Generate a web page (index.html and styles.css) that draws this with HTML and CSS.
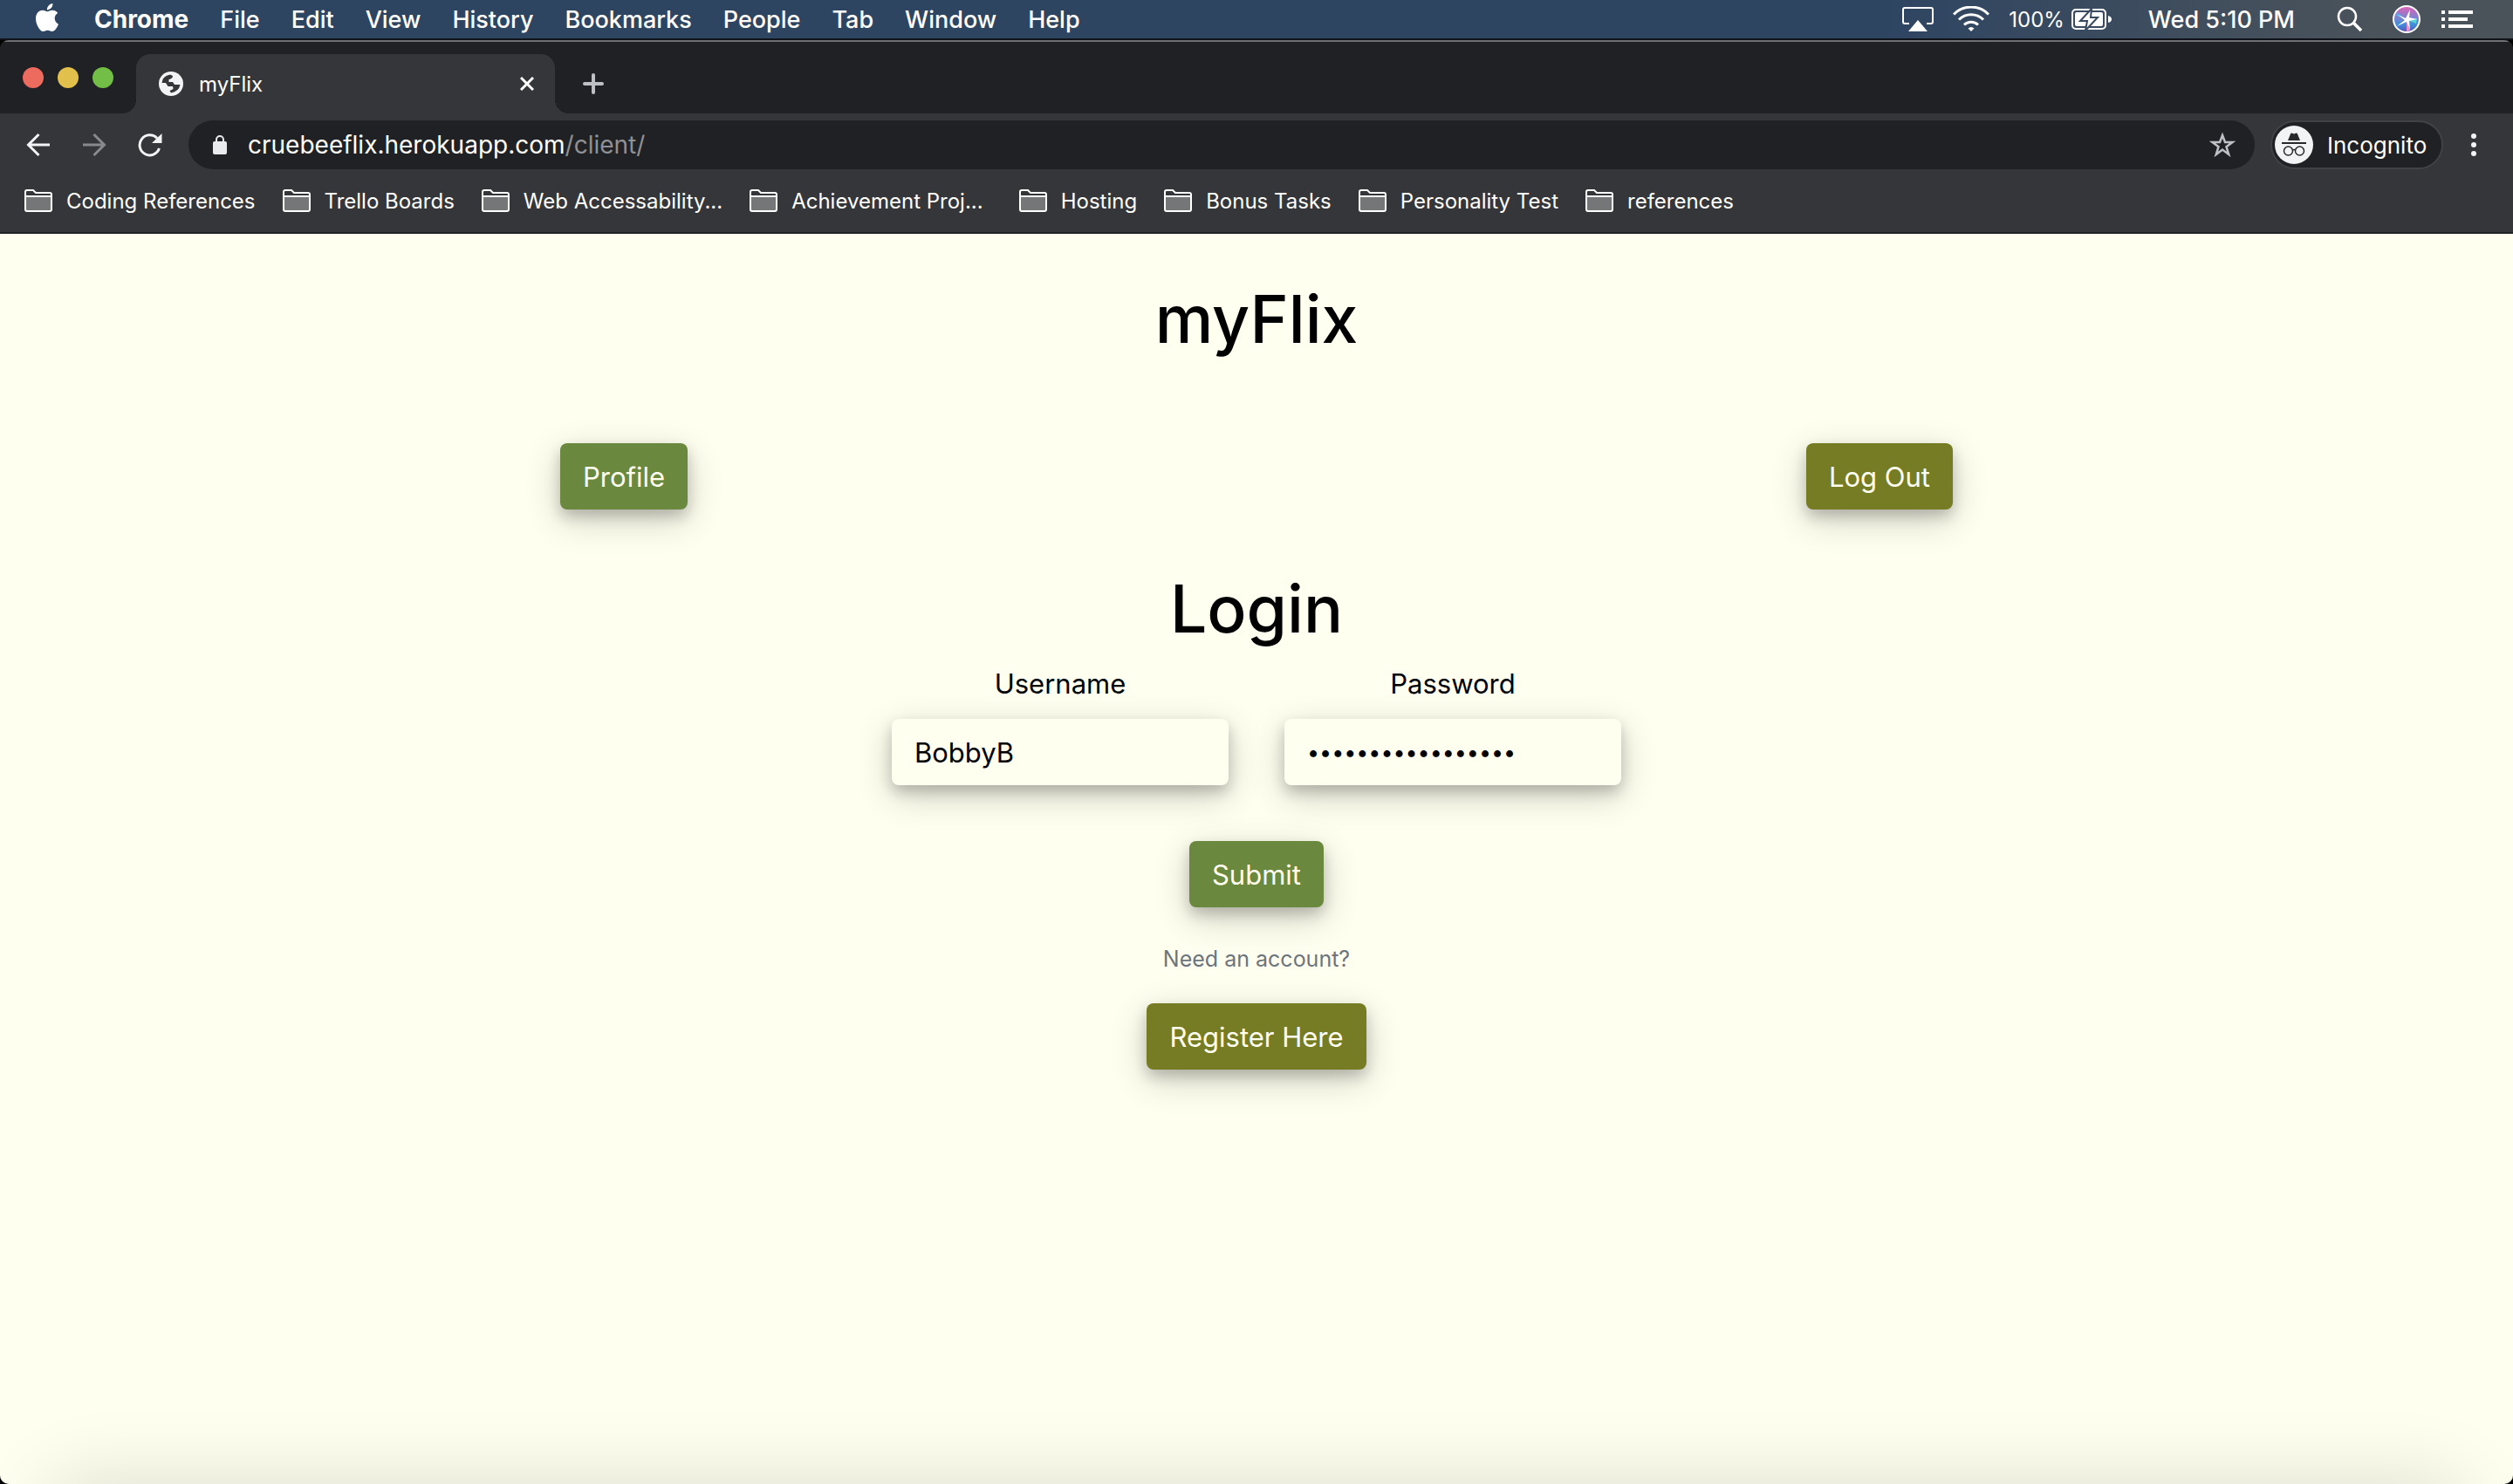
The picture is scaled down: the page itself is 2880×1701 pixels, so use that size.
FILE: index.html
```html
<!DOCTYPE html>
<html lang="en">
<head>
<meta charset="utf-8">
<title>myFlix</title>
<meta name="viewport" content="width=device-width, initial-scale=1">
<link rel="stylesheet" href="styles.css">
</head>
<body>
<svg class="defs" aria-hidden="true">
  <symbol id="folder" viewBox="0 0 32 26">
    <path d="M1 8h30v16H1z" fill="#757678"/>
    <path d="M1 8h30M1 3q0-2 2-2h7l3 3h16q2 0 2 2v17q0 2-2 2H3q-2 0-2-2z" fill="none" stroke="#fff" stroke-width="2"/>
  </symbol>
</svg>
<header class="menubar">
  <nav class="menus" aria-label="Menu bar">
    <svg class="apple" viewBox="2 0 20 24" fill="#fff" role="img" aria-label="Apple"><path d="M12.152 6.896c-.948 0-2.415-1.078-3.96-1.04-2.04.027-3.91 1.183-4.961 3.014-2.117 3.675-.546 9.103 1.519 12.09 1.013 1.454 2.208 3.09 3.792 3.039 1.52-.065 2.09-.987 3.935-.987 1.831 0 2.35.987 3.96.948 1.637-.026 2.676-1.48 3.676-2.948 1.156-1.688 1.636-3.325 1.662-3.415-.039-.013-3.182-1.221-3.22-4.857-.026-3.04 2.48-4.494 2.597-4.559-1.429-2.09-3.623-2.324-4.39-2.376-2-.156-3.675 1.09-4.61 1.09zM15.53 3.83c.843-1.012 1.4-2.427 1.245-3.83-1.207.052-2.662.805-3.532 1.818-.78.896-1.454 2.338-1.273 3.714 1.338.104 2.715-.688 3.559-1.701"/></svg>
    <button class="menu app">Chrome</button>
    <button class="menu">File</button>
    <button class="menu">Edit</button>
    <button class="menu">View</button>
    <button class="menu">History</button>
    <button class="menu">Bookmarks</button>
    <button class="menu">People</button>
    <button class="menu">Tab</button>
    <button class="menu">Window</button>
    <button class="menu">Help</button>
  </nav>
  <div class="status">
    <svg width="36" height="28" viewBox="0 0 36 28" role="img" aria-label="AirPlay"><path d="M8 19H3q-2 0-2-2V3q0-2 2-2h30q2 0 2 2v14q0 2-2 2h-5" fill="none" stroke="#fff" stroke-width="2"/><path d="M18 15l11 13H7z" fill="#fff"/></svg>
    <svg width="42" height="30" viewBox="0 0 42 30" role="img" aria-label="Wi-Fi"><g fill="none" stroke="#fff" stroke-width="3"><path d="M1 9.500a28 28 0 0 1 40 0"/><path d="M7 15.500a20 20 0 0 1 28 0"/><path d="M13 21.500a11.500 11.500 0 0 1 16 0"/></g><path d="M21 29l-3.500-3.500q3.500-3 7 0z" fill="#fff"/></svg>
    <div class="battery">
      <span>100%</span>
      <svg width="46" height="26" viewBox="0 0 46 26" role="img" aria-label="Charging"><rect x="1" y="2" width="38" height="22" rx="4" fill="none" stroke="#fff" stroke-width="2"/><rect x="4" y="5" width="32" height="16" rx="2" fill="#fff"/><path d="M42 9q4 1 4 4t-4 4z" fill="#fff"/><path d="M23 1L10 15h8l-2 11L30 11h-8z" fill="#fff" stroke="#37485f" stroke-width="2"/></svg>
    </div>
    <time class="clock">Wed 5:10 PM</time>
    <svg class="search" width="30" height="30" viewBox="0 0 30 30" fill="none" stroke="#fff" role="img" aria-label="Search"><circle cx="12" cy="12" r="10" stroke-width="2.500"/><path d="M19 19l9 9" stroke-width="3.500"/></svg>
    <svg class="siri" width="32" height="32" viewBox="0 0 32 32" role="img" aria-label="Siri">
      <defs><linearGradient id="orb" x1="0" y1="0" x2="0" y2="1"><stop offset="0" stop-color="#e45fb6"/><stop offset=".45" stop-color="#7b83cf"/><stop offset=".7" stop-color="#3f8fdc"/><stop offset="1" stop-color="#5a4fb0"/></linearGradient></defs>
      <circle cx="16" cy="16" r="15" fill="url(#orb)" stroke="#fff" stroke-width="2"/>
      <path d="M17 17l11-2-1 6z" fill="#52d4d4"/><path d="M15 16L4 12l1-4z" fill="#59a8e8"/><path d="M16 17l4 12-4 1z" fill="#f08fd0"/>
      <path d="M16 13l4-8-1 9 9 2-9 2 1 10-4-9-11 5 9-7-8-6 9 4z" fill="#fff"/>
    </svg>
    <svg width="36" height="20" viewBox="0 0 36 20" fill="#fff" role="img" aria-label="Notification Center"><path d="M0 0h4v4H0zM8 0h28v4H8zM0 8h4v4H0zM8 8h22v4H8zM0 16h4v4H0zM8 16h28v4H8z"/></svg>
  </div>
</header>

<div class="window">
  <div class="tabstrip">
    <div class="lights"><i class="light close"></i><i class="light min"></i><i class="light max"></i></div>
    <div class="tab">
      <svg width="28" height="28" viewBox="0 0 28 28" aria-hidden="true"><circle cx="14" cy="14" r="14" fill="#f1f3f4"/><path d="M3.500 13Q4 5 13 3.500L16 5q0 3-4.500 4v3H16l2 3h6.500Q23 23 14 24.500L12.500 22l4-2-.5-3h-5.500L8 13z" fill="#35363a"/></svg>
      <span class="tab-title">myFlix</span>
      <button class="icon-btn" aria-label="Close tab"><svg width="16" height="16" viewBox="0 0 16 16" stroke="#fff" stroke-width="3"><path d="M1 1l14 14M15 1L1 15"/></svg></button>
    </div>
    <button class="icon-btn new-tab" aria-label="New tab"><svg width="24" height="24" viewBox="0 0 24 24" stroke="#bdc1c6" stroke-width="4" stroke-linecap="round"><path d="M12 2v20M2 12h20"/></svg></button>
  </div>

  <div class="toolbar">
    <div class="nav-btns">
      <button class="icon-btn" aria-label="Back"><svg width="28" height="28" viewBox="0 0 28 28" fill="none" stroke="#f1f3f4" stroke-width="3"><path d="M27 14H3M14.500 2L2.500 14l12 12"/></svg></button>
      <button class="icon-btn" aria-label="Forward"><svg width="28" height="28" viewBox="0 0 28 28" fill="none" stroke="#88898c" stroke-width="3"><path d="M1 14h24M13.500 2l12 12-12 12"/></svg></button>
      <button class="icon-btn" aria-label="Reload"><svg width="28" height="28" viewBox="0 0 28 28" fill="none" stroke="#f1f3f4" stroke-width="3"><path d="M24.500 18A11.500 11.500 0 1 1 22 6.500"/><path d="M27.500 1v11H16z" fill="#f1f3f4" stroke="none"/></svg></button>
    </div>
    <div class="omnibox">
      <svg width="16" height="22" viewBox="0 0 16 22" aria-hidden="true"><rect y="7" width="16" height="15" rx="2" fill="#e8eaed"/><path d="M4 8V5a4 4 0 0 1 8 0v3" fill="none" stroke="#e8eaed" stroke-width="2"/></svg>
      <span class="url">cruebeeflix.herokuapp.com<span class="path">/client/</span></span>
      <button class="icon-btn" aria-label="Bookmark this page"><svg width="30" height="30" viewBox="0 0 30 30" fill="none" stroke="#bdc1c6" stroke-width="2.500"><path d="M15 4l3 8h8.500l-7 5.200 2.700 8.800-7.200-5.400L7.800 26l2.700-8.800-7-5.200H12z"/></svg></button>
    </div>
    <div class="profile-chip">
      <svg width="44" height="44" viewBox="0 0 44 44" aria-hidden="true"><circle cx="22" cy="22" r="22" fill="#f1f3f4"/><path d="M15 17l3-7.500q.6-1.500 2-.8l2 .8 2-.8q1.400-.7 2 .8L29 17z" fill="#28292c"/><path d="M8 20h28" stroke="#28292c" stroke-width="2"/><g fill="none" stroke="#28292c" stroke-width="1.500"><circle cx="15.500" cy="29" r="5"/><circle cx="28.500" cy="29" r="5"/><path d="M20.500 28q1.500-1 3 0"/></g></svg>
      <span>Incognito</span>
    </div>
    <button class="icon-btn kebab" aria-label="Browser menu"><svg width="6" height="26" viewBox="0 0 6 26" fill="#f1f3f4"><circle cx="3" cy="3" r="3"/><circle cx="3" cy="13" r="3"/><circle cx="3" cy="23" r="3"/></svg></button>
  </div>

  <nav class="bookmarks" aria-label="Bookmarks">
    <button class="bookmark"><svg class="folder"><use href="#folder"/></svg>Coding References</button>
    <button class="bookmark"><svg class="folder"><use href="#folder"/></svg>Trello Boards</button>
    <button class="bookmark"><svg class="folder"><use href="#folder"/></svg>Web Accessability...</button>
    <button class="bookmark wide"><svg class="folder"><use href="#folder"/></svg>Achievement Proj...</button>
    <button class="bookmark"><svg class="folder"><use href="#folder"/></svg>Hosting</button>
    <button class="bookmark"><svg class="folder"><use href="#folder"/></svg>Bonus Tasks</button>
    <button class="bookmark"><svg class="folder"><use href="#folder"/></svg>Personality Test</button>
    <button class="bookmark"><svg class="folder"><use href="#folder"/></svg>references</button>
  </nav>

  <main class="page">
    <h1 class="title">myFlix</h1>
    <div class="actions">
      <button class="btn green">Profile</button>
      <button class="btn olive">Log Out</button>
    </div>
    <form class="login">
      <h2 class="title">Login</h2>
      <div class="fields">
        <div class="field">
          <label for="username">Username</label>
          <input class="control" id="username" type="text" value="BobbyB">
        </div>
        <div class="field">
          <label for="password">Password</label>
          <input class="control secret" id="password" type="password" value="aaaaaaaaaaaaaaaaa">
        </div>
      </div>
      <button class="btn green" type="button">Submit</button>
      <p class="hint">Need an account?</p>
      <button class="btn olive" type="button">Register Here</button>
    </form>
    <div class="dock-shadow"></div>
  </main>
</div>
</body>
</html>
```
FILE: styles.css
```css
* { box-sizing: border-box; }

body {
  margin: 0;
  min-height: 100vh;
  display: flex;
  flex-direction: column;
  background: #000;
  color: #fff;
  font-family: Inter, "Liberation Sans", sans-serif;
  font-size: 28px;
}

button {
  margin: 0;
  padding: 0;
  border: 0;
  background: none;
  color: inherit;
  font: inherit;
  white-space: nowrap;
}

svg { display: block; flex: none; }
.defs { position: absolute; width: 0; height: 0; }
.icon-btn { display: flex; align-items: center; justify-content: center; }

/* macOS menu bar */
.menubar {
  height: 46px;
  padding: 0 46px 0 40px;
  display: flex;
  justify-content: space-between;
  align-items: center;
  background: linear-gradient(90deg, #2e4562 0, #2e4562 75%, #4b535a 95%, #4b535a 100%);
  border-bottom: 2px solid #10131a;
  font-size: 27px;
  font-weight: 500;
}
.menus, .status { display: flex; align-items: center; }
.menus { gap: 36px; }
.apple { width: 28px; height: 32px; margin: 0 4px 4px 0; }
.app { font-size: 28px; font-weight: 700; }
.status { gap: 22px; }
.battery { display: flex; align-items: center; gap: 8px; font-size: 24px; font-weight: 400; }
.clock { margin: 0 26px 0 20px; }
.siri { margin: 0 2px 0 12px; }

/* browser window */
.window {
  flex: 1;
  display: flex;
  flex-direction: column;
  border-radius: 10px;
  overflow: hidden;
  background: #35363a;
}

.tabstrip {
  height: 84px;
  display: flex;
  align-items: flex-end;
  background: #202124;
  border-top: 2px solid #6d6f72;
}
.lights { display: flex; gap: 16px; padding: 0 26px; margin-bottom: 29px; }
.light { width: 24px; height: 24px; border-radius: 50%; }
.close { background: #ec6a5e; }
.min { background: #e1c04c; }
.max { background: #72be47; }
.tab {
  position: relative;
  width: 480px;
  height: 68px;
  padding: 0 24px 0 26px;
  display: flex;
  align-items: center;
  gap: 18px;
  background: #35363a;
  border-radius: 16px 16px 0 0;
  font-size: 24px;
}
.tab::before, .tab::after {
  content: "";
  position: absolute;
  bottom: 0;
  width: 16px;
  height: 16px;
}
.tab::before { right: 100%; background: radial-gradient(circle at 0 0, #202124 16px, #35363a 16px); }
.tab::after { left: 100%; background: radial-gradient(circle at 100% 0, #202124 16px, #35363a 16px); }
.tab-title { flex: 1; }
.new-tab { height: 68px; margin-left: 32px; }

.toolbar {
  height: 72px;
  padding: 0 42px 0 30px;
  display: flex;
  align-items: center;
}
.nav-btns { display: flex; gap: 36px; margin-right: 30px; }
.omnibox {
  flex: 1;
  height: 56px;
  padding: 0 22px 0 28px;
  display: flex;
  align-items: center;
  gap: 24px;
  background: #202124;
  border-radius: 28px;
}
.url { flex: 1; font-size: 28px; }
.path { color: #8f9194; }
.profile-chip {
  width: 198px;
  height: 56px;
  margin: 0 32px 0 18px;
  padding-left: 3px;
  display: flex;
  align-items: center;
  gap: 16px;
  background: #202124;
  border: 2px solid #414246;
  border-radius: 28px;
  font-size: 26px;
}

.bookmarks {
  height: 66px;
  padding: 0 28px 8px;
  display: flex;
  align-items: center;
  gap: 31px;
  border-bottom: 2px solid #202124;
  font-size: 24px;
}
.bookmark { display: flex; align-items: center; gap: 16px; }
.wide { margin-right: 10px; }
.folder { width: 32px; height: 26px; }

/* page content */
.page {
  flex: 1;
  position: relative;
  overflow: hidden;
  padding: 50px 24px 0;
  display: flex;
  flex-direction: column;
  align-items: center;
  background: #fffff0;
  color: #000;
  font-size: 31px;
}
.title { margin: 0; font-size: 75px; font-weight: 500; line-height: 96px; }
.actions {
  width: 100%;
  max-width: 1596px;
  margin: 94px 0 66px;
  display: flex;
  justify-content: space-between;
}
.btn, .control {
  height: 76px;
  padding: 0 26px;
  border-radius: 8px;
  box-shadow: 0 8px 16px rgba(0, 0, 0, .2), 0 12px 40px rgba(0, 0, 0, .19);
}
.btn { color: #fffff0; }
.green { background: #6a893f; }
.olive { background: #767c24; }
.login { display: flex; flex-direction: column; align-items: center; }
.fields { display: flex; gap: 64px; margin: 14px 0 64px; }
.field {
  display: flex;
  flex-direction: column;
  gap: 16px;
  text-align: center;
  line-height: 48px;
}
.control {
  width: 386px;
  border: 0;
  background: #fffff0;
  color: #000;
  font: inherit;
}
.secret { font-size: 25px; }
.hint { margin: 40px 0 32px; color: #6c757d; font-size: 25px; line-height: 38px; }

.dock-shadow {
  position: absolute;
  top: 100%;
  left: 60px;
  right: 60px;
  height: 100px;
  box-shadow: 0 0 90px rgba(0, 0, 0, .14);
}
```
